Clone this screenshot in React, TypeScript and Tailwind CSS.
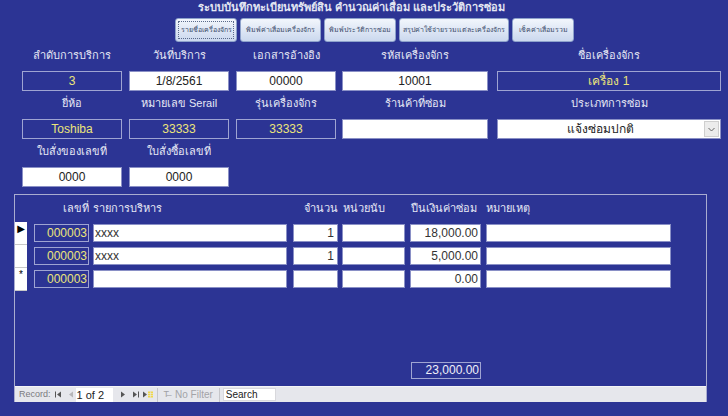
import React from "react";

const font = { fontFamily: '"Liberation Sans", "Noto Sans", "DejaVu Sans", sans-serif' };

function Label({ text, w, ml }: { text: string; w: string; ml: string }) {
  return <div className={`${w} ${ml} text-center text-[11px] leading-[15px] text-[#e6e8f4]`}>{text}</div>;
}

function Locked({ value, w, ml }: { value: string; w: string; ml: string }) {
  return (
    <div className={`${w} ${ml} h-[20px] border border-[#9fa4d2] text-center text-[12px] leading-[18px] text-[#ebe57a]`}>
      {value}
    </div>
  );
}

function Plain({ value, w, ml }: { value: string; w: string; ml: string }) {
  return (
    <div className={`${w} ${ml} h-[20px] border border-[#8a90c6] bg-white text-center text-[12px] leading-[18px] text-[#222]`}>
      {value}
    </div>
  );
}

const buttons = [
  { t: "รายชื่อเครื่องจักร", w: "w-[62px]", focus: true },
  { t: "พิมพ์ค่าเสื่อมเครื่องจักร", w: "w-[81px]" },
  { t: "พิมพ์ประวัติการซ่อม", w: "w-[72px]" },
  { t: "สรุปค่าใช้จ่ายรวมแต่ละเครื่องจักร", w: "w-[110px]" },
  { t: "เช็คค่าเสื่อมรวม", w: "w-[62px]" },
];

const rows = [
  { sel: "▶", item: "xxxx", qty: "1", amt: "18,000.00" },
  { sel: "", item: "xxxx", qty: "1", amt: "5,000.00" },
  { sel: "*", item: "", qty: "", amt: "0.00" },
];

const cell = "h-[18px] border border-[#8a90c6] bg-white text-[12px] leading-[16px] text-[#333]";

export default function App() {
  return (
    <div className="h-[416px] w-[728px] overflow-hidden bg-[#2c3494]" style={font}>
      {/* title */}
      <div className="h-[16px] pl-[198px] text-[11px] font-bold leading-[15px] text-[#e3e6f2]">
        ระบบบันทึกทะเบียนทรัพย์สิน คำนวณค่าเสื่อม และประวัติการซ่อม
      </div>

      {/* buttons */}
      <div className="ml-[175px] mt-[2px] flex gap-[3px]">
        {buttons.map((b) => (
          <div
            key={b.t}
            className={`${b.w} flex h-[24px] items-center justify-center rounded-[3px] border border-[#8ea2cb] bg-gradient-to-b from-[#f2f6fc] to-[#cbd8ee] p-[2px]`}
          >
            <div
              className={`flex h-full w-full items-center justify-center whitespace-nowrap text-[7px] text-[#3a4a6a] ${
                b.focus ? "border border-dotted border-[#5a6a8a]" : ""
              }`}
            >
              {b.t}
            </div>
          </div>
        ))}
      </div>

      {/* header fields */}
      <div className="mt-[6px] flex">
        <Label text="ลำดับการบริการ" w="w-[100px]" ml="ml-[22px]" />
        <Label text="วันที่บริการ" w="w-[100px]" ml="ml-[7px]" />
        <Label text="เอกสารอ้างอิง" w="w-[100px]" ml="ml-[7px]" />
        <Label text="รหัสเครื่องจักร" w="w-[146px]" ml="ml-[6px]" />
        <Label text="ชื่อเครื่องจักร" w="w-[224px]" ml="ml-[9px]" />
      </div>
      <div className="mt-[8px] flex">
        <Locked value="3" w="w-[100px]" ml="ml-[22px]" />
        <Plain value="1/8/2561" w="w-[100px]" ml="ml-[7px]" />
        <Plain value="00000" w="w-[100px]" ml="ml-[7px]" />
        <Plain value="10001" w="w-[146px]" ml="ml-[6px]" />
        <Locked value="เครื่อง 1" w="w-[224px]" ml="ml-[9px]" />
      </div>

      <div className="mt-[5px] flex">
        <Label text="ยี่ห้อ" w="w-[100px]" ml="ml-[22px]" />
        <Label text="หมายเลข Serail" w="w-[100px]" ml="ml-[7px]" />
        <Label text="รุ่นเครื่องจักร" w="w-[100px]" ml="ml-[7px]" />
        <Label text="ร้านค้าที่ซ่อม" w="w-[146px]" ml="ml-[6px]" />
        <Label text="ประเภทการซ่อม" w="w-[224px]" ml="ml-[9px]" />
      </div>
      <div className="mt-[8px] flex">
        <Locked value="Toshiba" w="w-[100px]" ml="ml-[22px]" />
        <Locked value="33333" w="w-[100px]" ml="ml-[7px]" />
        <Locked value="33333" w="w-[100px]" ml="ml-[7px]" />
        <Plain value="" w="w-[146px]" ml="ml-[6px]" />
        <div className="ml-[9px] flex h-[20px] w-[224px] border border-[#8a90c6] bg-white">
          <div className="flex-1 text-center text-[12px] leading-[18px] text-[#222]">แจ้งซ่อมปกติ</div>
          <div className="m-[1px] flex w-[15px] items-center justify-center border border-[#cfcfcf] bg-[#ececec]">
            <svg width="7" height="5" viewBox="0 0 7 5">
              <path d="M0.5 1 L3.5 4 L6.5 1" fill="none" stroke="#666" strokeWidth="1" />
            </svg>
          </div>
        </div>
      </div>

      <div className="mt-[5px] flex">
        <Label text="ใบสั่งของเลขที่" w="w-[100px]" ml="ml-[22px]" />
        <Label text="ใบสั่งซื้อเลขที่" w="w-[100px]" ml="ml-[7px]" />
      </div>
      <div className="mt-[8px] flex">
        <Plain value="0000" w="w-[100px]" ml="ml-[22px]" />
        <Plain value="0000" w="w-[100px]" ml="ml-[7px]" />
      </div>

      {/* subform */}
      <div className="ml-[14px] mt-[7px] flex h-[208px] w-[693px] flex-col border-x border-t border-[#a9acd0]">
        <div className="flex h-[27px] items-center text-[11px] text-[#e6e8f4]">
          <div className="w-[74px] text-right">เลขที่</div>
          <div className="ml-[4px] w-[194px]">รายการบริหาร</div>
          <div className="ml-[6px] w-[45px] text-right">จำนวน</div>
          <div className="ml-[4px] w-[63px] pl-[1px]">หน่วยนับ</div>
          <div className="ml-[5px] w-[71px] pl-[1px]">ปืนเงินค่าซ่อม</div>
          <div className="ml-[5px]">หมายเหตุ</div>
        </div>
        {rows.map((r, i) => (
          <div key={i} className="flex h-[23px]">
            <div className="flex w-[12px] shrink-0 items-start justify-center border-b border-[#c8c8c8] bg-white pt-[1px] text-[10px] leading-[12px] text-black">
              {r.sel}
            </div>
            <div className="ml-[7px] mt-[2px] h-[18px] w-[55px] border border-[#9fa4d2] pr-[1px] text-right text-[12px] leading-[16px] text-[#ebe57a]">
              000003
            </div>
            <div className={`ml-[4px] mt-[2px] w-[194px] pl-[1px] text-[11px] ${cell}`}>{r.item}</div>
            <div className={`ml-[6px] mt-[2px] w-[45px] pr-[3px] text-right ${cell}`}>{r.qty}</div>
            <div className={`ml-[4px] mt-[2px] w-[63px] ${cell}`}></div>
            <div className={`ml-[5px] mt-[2px] w-[71px] pr-[2px] text-right ${cell}`}>{r.amt}</div>
            <div className={`ml-[5px] mt-[2px] w-[185px] ${cell}`}></div>
          </div>
        ))}

        <div className="ml-[396px] mt-[71px] h-[17px] w-[70px] border border-[#9fa4d2] pr-[1px] text-right text-[12px] leading-[15px] text-[#f0f0f8]">
          23,000.00
        </div>

        {/* navigation bar */}
        <div className="mt-auto flex h-[16px] items-center border-t border-[#f4f4f6] bg-[#e6e7ec] text-[10px] text-[#7a7a80]">
          <span className="ml-[4px] text-[9px]">Record:</span>
          <svg className="ml-[4px]" width="6" height="7" viewBox="0 0 6 7">
            <rect x="0" y="0.5" width="1" height="6" fill="#555" />
            <path d="M6 0.5 L2 3.5 L6 6.5Z" fill="#555" />
          </svg>
          <svg className="ml-[8px]" width="4" height="7" viewBox="0 0 4 7">
            <path d="M4 0.5 L0 3.5 L4 6.5Z" fill="#b5b5b8" />
          </svg>
          <div className="ml-[3px] h-[14px] w-[37px] bg-white pl-[1px] text-[11px] leading-[14px] text-[#222]">1 of 2</div>
          <svg className="ml-[8px]" width="4" height="7" viewBox="0 0 4 7">
            <path d="M0 0.5 L4 3.5 L0 6.5Z" fill="#555" />
          </svg>
          <svg className="ml-[8px]" width="6" height="7" viewBox="0 0 6 7">
            <path d="M0 0.5 L4 3.5 L0 6.5Z" fill="#555" />
            <rect x="5" y="0.5" width="1" height="6" fill="#555" />
          </svg>
          <svg className="ml-[4px]" width="10" height="7" viewBox="0 0 10 7">
            <path d="M0 0.5 L4 3.5 L0 6.5Z" fill="#555" />
            <rect x="5" y="0.5" width="5" height="6" fill="#f0d84a" />
            <path d="M5 2.5 H10 M5 4.5 H10 M7.5 0.5 V6.5" stroke="#e6e7ec" strokeWidth="0.6" />
          </svg>
          <div className="ml-[4px] h-[14px] w-px bg-[#c6c6ca]" />
          <span className="ml-[6px] text-[9px] text-[#a0a0a4]">T̶</span>
          <span className="ml-[6px] text-[#a3a3a8]">No Filter</span>
          <div className="ml-[6px] h-[14px] w-px bg-[#c6c6ca]" />
          <div className="ml-[3px] h-[13px] w-[53px] border border-[#d8d8dc] bg-white pl-[2px] text-[10px] leading-[12px] text-[#222]">
            Search
          </div>
        </div>
      </div>
    </div>
  );
}
